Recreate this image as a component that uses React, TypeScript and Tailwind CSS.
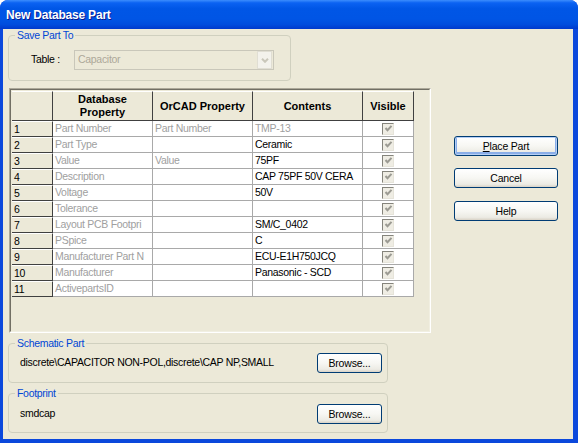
import React from "react";

type Row = {
  n: string;
  db: string;
  orcad: string;
  contents: string;
  dimContents?: boolean;
};

const rows: Row[] = [
  { n: "1", db: "Part Number", orcad: "Part Number", contents: "TMP-13", dimContents: true },
  { n: "2", db: "Part Type", orcad: "", contents: "Ceramic" },
  { n: "3", db: "Value", orcad: "Value", contents: "75PF" },
  { n: "4", db: "Description", orcad: "", contents: "CAP 75PF 50V CERA" },
  { n: "5", db: "Voltage", orcad: "", contents: "50V" },
  { n: "6", db: "Tolerance", orcad: "", contents: "" },
  { n: "7", db: "Layout PCB Footpri", orcad: "", contents: "SM/C_0402" },
  { n: "8", db: "PSpice", orcad: "", contents: "C" },
  { n: "9", db: "Manufacturer Part N", orcad: "", contents: "ECU-E1H750JCQ" },
  { n: "10", db: "Manufacturer", orcad: "", contents: "Panasonic - SCD" },
  { n: "11", db: "ActivepartsID", orcad: "", contents: "" },
];

function XpButton({
  children,
  wide,
  isDefault,
}: {
  children: React.ReactNode;
  wide?: boolean;
  isDefault?: boolean;
}) {
  return (
    <button
      type="button"
      className={`${wide ? "w-[104px]" : "w-[65px]"} h-[20px] shrink-0 rounded-[3px] border border-[#003C74] bg-[linear-gradient(to_bottom,#FFFFFF_0%,#F7F7F3_50%,#ECEBE4_85%,#D8D2C6_100%)] text-[10.5px] tracking-[-0.2px] leading-none text-black ${
        isDefault ? "shadow-[inset_0_0_0_1px_#B6CFF5,inset_0_-1px_0_2px_#8AAEE8]" : ""
      }`}
    >
      {children}
    </button>
  );
}

function DisabledCheck() {
  return (
    <div className="w-[12px] h-[12px] border-l border-t border-[#85847C] border-r border-b border-r-[#E6E4DA] border-b-[#E6E4DA] bg-[#EFEDE4] flex items-center justify-center">
      <svg width="9" height="9" viewBox="0 0 9 9">
        <path d="M1.5 4 L3.5 6.2 L7.5 1.8" fill="none" stroke="#9C9B93" strokeWidth="2" />
      </svg>
    </div>
  );
}

export default function App() {
  const fixed = "bg-[#ECE9D8] border-t border-t-white border-r border-b border-r-[#404040] border-b-[#404040]";
  const head = `${fixed} h-[30px] flex items-center justify-center text-center font-bold text-[11px] tracking-normal`;
  const cell = "bg-white border-r border-b border-[#A9A9A9] pl-[2px] whitespace-nowrap overflow-hidden leading-[15px]";

  return (
    <div className="w-[578px] h-[443px] flex flex-col rounded-t-[8px] overflow-hidden bg-[#0B48DC] font-['Liberation_Sans',Arial,sans-serif] text-[10.5px] tracking-[-0.3px] text-black">
      {/* title bar */}
      <div className="h-[29px] shrink-0 flex items-center pl-[6px] bg-[linear-gradient(to_bottom,#3C8DFD_0%,#0B62F2_10%,#0056E6_30%,#0055E5_65%,#004CDD_85%,#0039CC_100%)]">
        <span className="text-[12px] font-bold tracking-[-0.2px] text-white [text-shadow:1px_1px_0_#0A1A8C]">
          New Database Part
        </span>
      </div>

      {/* body */}
      <div className="flex-1 flex border-l-[3px] border-r-[5px] border-b-[4px] border-[#0B48DC] bg-[#ECE9D8]">
        <div className="flex flex-col w-[423px] ml-[5px]">
          <fieldset className="w-[283px] border border-[#D0D0BF] rounded-[4px] pb-[10px]">
            <legend className="ml-[6px] px-[2px] leading-[13px] text-[#0046D5]">Save Part To</legend>
            <div className="flex items-center pt-[8px] pl-[22px]">
              <span className="w-[43px]">Table :</span>
              <div className="w-[200px] h-[20px] border border-[#C9C7BA] bg-[#ECE9D8] flex items-center justify-between">
                <span className="pl-[3px] text-[#ACA899]">Capacitor</span>
                <div className="w-[15px] h-[18px] mr-[1px] border border-[#E0DED3] bg-[#F3F2EC] flex items-center justify-center">
                  <svg width="8" height="5" viewBox="0 0 8 5">
                    <path d="M1 0.8 L4 3.8 L7 0.8" fill="none" stroke="#C9C7BA" strokeWidth="2" />
                  </svg>
                </div>
              </div>
            </div>
          </fieldset>

          {/* grid */}
          <div className="mt-[7px] ml-[1px] w-[422px] h-[245px] border border-[#ACA899] border-r-white border-b-white">
            <div className="h-full border border-[#716F64] border-r-[#F1EFE2] border-b-[#F1EFE2] pl-[1px] pt-[1px]">
              <div className="grid grid-cols-[41px_100px_100px_110px_51px] w-[402px]">
                <div className={`${fixed} h-[30px]`} />
                <div className={`${head} leading-[13px]`}>
                  Database
                  <br />
                  Property
                </div>
                <div className={head}>OrCAD Property</div>
                <div className={head}>Contents</div>
                <div className={head}>Visible</div>

                {rows.map((r) => (
                  <React.Fragment key={r.n}>
                    <div className={`${fixed} h-[16px] pl-[2px] leading-[14px]`}>{r.n}</div>
                    <div className={`${cell} h-[16px] text-[#A0A0A0]`}>{r.db}</div>
                    <div className={`${cell} h-[16px] text-[#A0A0A0]`}>{r.orcad}</div>
                    <div className={`${cell} h-[16px] ${r.dimContents ? "text-[#A0A0A0]" : "text-black"}`}>
                      {r.contents}
                    </div>
                    <div className="bg-white border-r border-b border-[#A9A9A9] h-[16px] flex items-center justify-center">
                      <DisabledCheck />
                    </div>
                  </React.Fragment>
                ))}
              </div>
            </div>
          </div>

          <fieldset className="mt-[4px] w-[380px] border border-[#D0D0BF] rounded-[4px] pb-[9px]">
            <legend className="ml-[6px] px-[2px] leading-[13px] text-[#0046D5]">Schematic Part</legend>
            <div className="flex items-center justify-between pt-[3px] pl-[11px] pr-[5px]">
              <span>discrete\CAPACITOR NON-POL,discrete\CAP NP,SMALL</span>
              <XpButton>Browse...</XpButton>
            </div>
          </fieldset>

          <fieldset className="mt-[4px] w-[380px] border border-[#D0D0BF] rounded-[4px] pb-[8px]">
            <legend className="ml-[6px] px-[2px] leading-[13px] text-[#0046D5]">Footprint</legend>
            <div className="flex items-center justify-between pt-[4px] pl-[11px] pr-[5px]">
              <span>smdcap</span>
              <XpButton>Browse...</XpButton>
            </div>
          </fieldset>
        </div>

        <div className="flex flex-col ml-[23px] pt-[107px]">
          <XpButton wide isDefault>
            <span className="underline">P</span>lace Part
          </XpButton>
          <div className="mt-[12px]">
            <XpButton wide>Cancel</XpButton>
          </div>
          <div className="mt-[13px]">
            <XpButton wide>Help</XpButton>
          </div>
        </div>
      </div>
    </div>
  );
}
